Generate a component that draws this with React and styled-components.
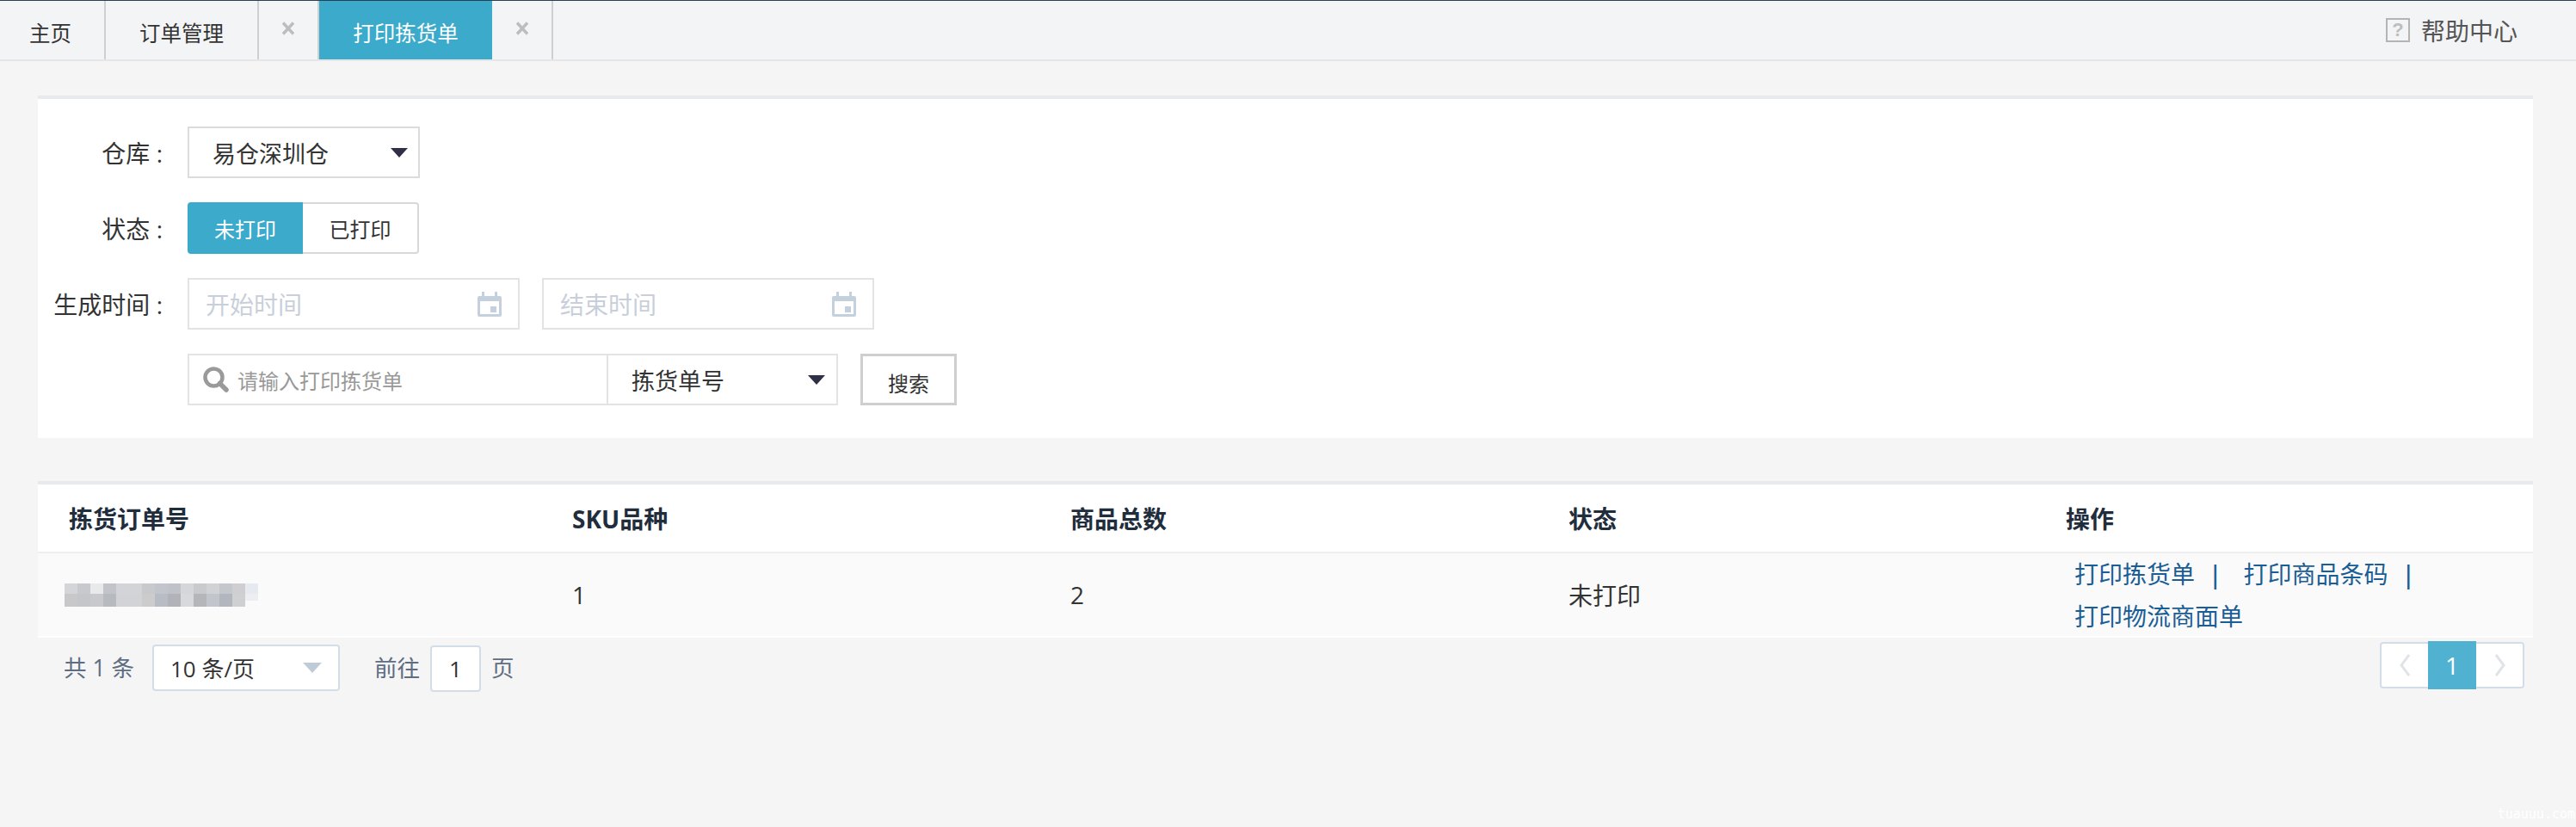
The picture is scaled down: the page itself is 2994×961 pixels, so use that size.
import React from 'react';
import styled, { createGlobalStyle } from 'styled-components';

const GlobalStyle = createGlobalStyle`
  html, body {
    margin: 0;
    padding: 0;
    background: #f5f5f5;
  }
  * {
    box-sizing: border-box;
  }
`;

const Page = styled.div`
  position: relative;
  width: 2994px;
  height: 961px;
  overflow: hidden;
  background: #f5f5f5;
  border-top: 1px solid #2b3f54;
  font-family: "Open Sans", "Noto Sans CJK SC", sans-serif;
  color: #333;
`;

const TabBar = styled.div`
  display: flex;
  height: 70px;
  background: #f3f4f6;
  border-bottom: 2px solid #e6e6e6;
`;

const Tab = styled.div`
  display: flex;
  align-items: center;
  justify-content: center;
  width: ${(p) => p.$w}px;
  padding-top: 4px;
  padding-right: ${(p) => p.$pr || 0}px;
  font-size: 24.5px;
  color: ${(p) => (p.$active ? '#fff' : '#333')};
  background: ${(p) => (p.$active ? '#3caacb' : 'transparent')};
  border-right: ${(p) => (p.$active ? 'none' : '2px solid #cfcfcf')};
`;

const CloseTab = styled.div`
  display: flex;
  align-items: center;
  justify-content: center;
  width: ${(p) => p.$w}px;
  padding-bottom: 4px;
  border-right: 2px solid #cfcfcf;
`;

const HelpLink = styled.div`
  display: flex;
  align-items: center;
  gap: 13px;
  margin-left: auto;
  margin-right: 68px;
  font-size: 28px;
  color: #555;
`;

const HelpBox = styled.span`
  display: flex;
  align-items: center;
  justify-content: center;
  width: 28px;
  height: 28px;
  border: 2px solid #b4b4b4;
  font-family: "Liberation Sans", sans-serif;
  font-size: 22px;
  font-weight: 700;
  color: #bdbdbd;
`;

const Panel = styled.section`
  margin: ${(p) => p.$top}px 50px 0 44px;
  background: #fff;
  border-top: 4px solid #e7eaec;
`;

const FilterForm = styled.div`
  display: flex;
  flex-direction: column;
  gap: 28px;
  padding: 32px 0 38px;
`;

const FormRow = styled.div`
  display: flex;
  align-items: center;
  height: 60px;
`;

const Label = styled.div`
  width: 145px;
  margin-right: 29px;
  text-align: right;
  white-space: nowrap;
  font-size: 28px;
  color: #333;
`;

const SelectBox = styled.div`
  display: flex;
  align-items: center;
  justify-content: space-between;
  width: ${(p) => p.$w}px;
  height: 60px;
  padding: 0 ${(p) => p.$right}px 0 ${(p) => p.$left}px;
  font-size: 27px;
  color: #333;
  background: #fff;
  border: 2px solid #dcdcdc;
`;

const Toggle = styled.div`
  display: flex;
  align-items: center;
  justify-content: center;
  width: ${(p) => p.$w}px;
  height: 60px;
  font-size: 24px;
  color: ${(p) => (p.$on ? '#fff' : '#333')};
  background: ${(p) => (p.$on ? '#3caacb' : '#fff')};
  border: ${(p) => (p.$on ? 'none' : '2px solid #d8d8d8')};
  border-left: none;
  border-radius: ${(p) => (p.$on ? '4px 0 0 4px' : '0 4px 4px 0')};
`;

const DateInput = styled.div`
  display: flex;
  align-items: center;
  justify-content: space-between;
  width: 386px;
  height: 60px;
  margin-right: 26px;
  padding: 0 19px 0 19px;
  font-size: 28px;
  color: #c8cfdb;
  border: 2px solid #e3e3e6;
`;

const SearchInput = styled.div`
  display: flex;
  align-items: center;
  gap: 10px;
  width: 487px;
  height: 60px;
  padding-left: 16px;
  font-size: 24px;
  color: #999;
  border: 2px solid #e3e3e3;
  border-right: none;
`;

const SearchSelect = styled(SelectBox)`
  margin-right: 26px;
  border-color: #e3e3e3;
`;

const SearchButton = styled.div`
  display: flex;
  align-items: center;
  justify-content: center;
  width: 112px;
  height: 60px;
  padding-top: 6px;
  font-size: 24px;
  color: #333;
  background: #fff;
  border: 3px solid #cfcfcf;
`;

const Grid = styled.div`
  display: grid;
  grid-template-columns: 581px 579px 579px 578px 583px;
`;

const HeadRow = styled(Grid)`
  height: 80px;
  align-items: center;
  border-bottom: 2px solid #eeeeee;
`;

const HeadCell = styled.div`
  padding-left: ${(p) => (p.$first ? 36 : 40)}px;
  font-size: 28px;
  font-weight: 700;
  color: #1f2d3d;
`;

const BodyRow = styled(Grid)`
  height: 96px;
  grid-auto-rows: 96px;
  align-items: center;
  background: #fafafa;
`;

const BodyCell = styled.div`
  padding-left: ${(p) => (p.$first ? 31 : 40)}px;
  font-size: 28px;
  color: #333;
`;

const ActionCell = styled(BodyCell)`
  padding-left: 50px;
  line-height: 49px;
  margin-top: 2px;
`;

const ActionLink = styled.span`
  display: inline-block;
  white-space: nowrap;
  color: #1a5e95;
`;

const Divider = styled.span`
  display: inline-block;
  margin: ${(p) => (p.$last ? '0 0 0 16px' : '0 25px 0 16px')};
  font-weight: 600;
  color: #1a5e95;
`;

const TableEnd = styled.div`
  height: 2px;
  background: #fff;
`;

const Pagination = styled.div`
  display: flex;
  align-items: center;
  height: 60px;
  margin: 5px 60px 0 74px;
`;

const PagerText = styled.span`
  margin-bottom: 4px;
  font-size: 26.5px;
  color: #5e6d82;
`;

const SizeSelect = styled.div`
  display: flex;
  align-items: center;
  justify-content: space-between;
  width: 218px;
  height: 54px;
  margin: 0 40px 0 21px;
  padding: 0 19px;
  font-size: 26px;
  color: #333;
  background: #fff;
  border: 2px solid #d3dde8;
  border-radius: 4px;
`;

const PageInput = styled.div`
  display: flex;
  align-items: center;
  justify-content: center;
  width: 59px;
  height: 54px;
  margin: 2px 12px 0 12px;
  font-size: 26px;
  color: #333;
  background: #fff;
  border: 2px solid #d3dde8;
  border-radius: 4px;
`;

const Pager = styled.div`
  display: flex;
  align-items: center;
  height: 54px;
  margin-left: auto;
  margin-top: -6px;
  background: #fff;
  border: 2px solid #d3dde8;
  border-radius: 4px;
`;

const PagerArrow = styled.div`
  display: flex;
  align-items: center;
  justify-content: center;
  width: 54px;
`;

const PagerCurrent = styled.div`
  display: flex;
  align-items: center;
  justify-content: center;
  width: 56px;
  height: 56px;
  font-size: 28px;
  color: #fff;
  background: #50b2d0;
`;

const Watermark = styled.div`
  position: absolute;
  right: 1px;
  bottom: 6px;
  font-family: "DejaVu Sans Mono", monospace;
  font-size: 15px;
  color: #fff;
`;

const CloseIcon = () => (
  <svg width="16" height="16" viewBox="0 0 16 16">
    <path d="M2 1.5 L14 14.5 M14 1.5 L2 14.5" stroke="#bdbdbd" strokeWidth="3.4" fill="none" />
  </svg>
);

const Caret = ({ w = 20, h = 11, color = '#2f2f45' }) => (
  <svg width={w} height={h} viewBox="0 0 20 11">
    <path d="M0 0 H20 L10 11 Z" fill={color} />
  </svg>
);

const CalendarIcon = () => (
  <svg width="28" height="29" viewBox="0 0 28 29">
    <path
      fill="#c5d0de"
      fillRule="evenodd"
      d="M2 5 H5 V0 H8 V5 H20 V0 H23 V5 H26 Q28 5 28 7 V27 Q28 29 26 29 H2 Q0 29 0 27 V7 Q0 5 2 5 Z M3 11 V26 H25 V11 Z"
    />
    <rect x="15" y="17" width="7" height="7" fill="#c5d0de" />
  </svg>
);

const SearchIcon = () => (
  <svg width="30" height="30" viewBox="0 0 30 30">
    <circle cx="12.5" cy="12.5" r="10" fill="none" stroke="#9a9a9a" strokeWidth="4.5" />
    <path d="M19.5 19.5 L27 27" stroke="#9a9a9a" strokeWidth="5.5" strokeLinecap="round" />
  </svg>
);

const Chevron = ({ flip }) => (
  <svg width="13" height="26" viewBox="0 0 13 26">
    <path d={flip ? 'M2 1 L11 13 L2 25' : 'M11 1 L2 13 L11 25'} fill="none" stroke="#e0e3e8" strokeWidth="3" />
  </svg>
);

// mosaic over the order number
const mosaic = [
  ['#d4d5d8', '#c7c9ce', '#e8e9ea', '#c2c4c9', '#d2d4d8', '#d2d4d8', '#c7c9cd', '#c2c6cc', '#bfc2c8', '#d4d6d9', '#c8cace', '#d0d2d5', '#c4c7cb', '#cfcfd2', '#e6e9ef'],
  ['#c8c8ca', '#c5c6c9', '#c8c9cc', '#b7babf', '#d2d3d7', '#d1d3d6', '#cbcccb', '#b8bcc4', '#b1b3b8', '#d8d9dc', '#b5b6b9', '#c2c5cb', '#b2b6bf', '#cfd0d1', '#eceef2'],
];

const MosaicBlock = () => (
  <svg width="225" height="27" viewBox="0 0 225 27" style={{ display: 'block' }}>
    {mosaic.map((row, y) =>
      row.map((c, x) => (
        <rect key={`${x}-${y}`} x={x * 15} y={y * 12} width="15" height={y === 0 ? 12 : x === 14 ? 8 : 15} fill={c} />
      ))
    )}
  </svg>
);

const App = () => (
  <Page>
    <GlobalStyle />
    <TabBar>
      <Tab $w={123} $pr={4}>主页</Tab>
      <Tab $w={178}>订单管理</Tab>
      <CloseTab $w={70}><CloseIcon /></CloseTab>
      <Tab $w={201} $active>打印拣货单</Tab>
      <CloseTab $w={71}><CloseIcon /></CloseTab>
      <HelpLink>
        <HelpBox>?</HelpBox>
        帮助中心
      </HelpLink>
    </TabBar>

    <Panel $top={40}>
      <FilterForm>
        <FormRow>
          <Label>仓库 :</Label>
          <SelectBox $w={270} $left={27} $right={12}>
            易仓深圳仓
            <Caret />
          </SelectBox>
        </FormRow>
        <FormRow>
          <Label>状态 :</Label>
          <Toggle $w={134} $on>未打印</Toggle>
          <Toggle $w={135}>已打印</Toggle>
        </FormRow>
        <FormRow>
          <Label>生成时间 :</Label>
          <DateInput>
            开始时间
            <CalendarIcon />
          </DateInput>
          <DateInput>
            结束时间
            <CalendarIcon />
          </DateInput>
        </FormRow>
        <FormRow>
          <Label />
          <SearchInput>
            <SearchIcon />
            请输入打印拣货单
          </SearchInput>
          <SearchSelect $w={269} $left={27} $right={13}>
            拣货单号
            <Caret />
          </SearchSelect>
          <SearchButton>搜索</SearchButton>
        </FormRow>
      </FilterForm>
    </Panel>

    <Panel $top={50}>
      <HeadRow>
        <HeadCell $first>拣货订单号</HeadCell>
        <HeadCell>SKU品种</HeadCell>
        <HeadCell>商品总数</HeadCell>
        <HeadCell>状态</HeadCell>
        <HeadCell>操作</HeadCell>
      </HeadRow>
      <BodyRow>
        <BodyCell $first><MosaicBlock /></BodyCell>
        <BodyCell>1</BodyCell>
        <BodyCell>2</BodyCell>
        <BodyCell>未打印</BodyCell>
        <ActionCell>
          <ActionLink>打印拣货单</ActionLink>
          <Divider>|</Divider>
          <ActionLink>打印商品条码</ActionLink>
          <Divider $last>|</Divider>
          <ActionLink>打印物流商面单</ActionLink>
        </ActionCell>
      </BodyRow>
      <TableEnd />
    </Panel>

    <Pagination>
      <PagerText>共 1 条</PagerText>
      <SizeSelect>
        10 条/页
        <Caret w={22} h={12} color="#c0cbd9" />
      </SizeSelect>
      <PagerText>前往</PagerText>
      <PageInput>1</PageInput>
      <PagerText>页</PagerText>
      <Pager>
        <PagerArrow><Chevron /></PagerArrow>
        <PagerCurrent>1</PagerCurrent>
        <PagerArrow><Chevron flip /></PagerArrow>
      </Pager>
    </Pagination>

    <Watermark>tuauuu.com</Watermark>
  </Page>
);

export default App;
